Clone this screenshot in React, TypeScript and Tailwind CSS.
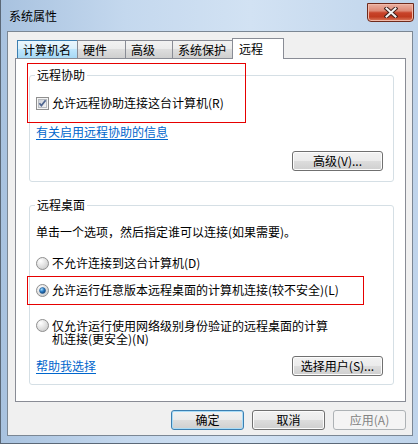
import React from "react";

type Tab = { label: string; w: string; hover?: boolean; active?: boolean };

const tabs: Tab[] = [
  { label: "计算机名", w: "w-[61px]", hover: true },
  { label: "硬件", w: "w-[49px]" },
  { label: "高级", w: "w-[48px]" },
  { label: "系统保护", w: "w-[61px]" },
  { label: "远程", w: "w-[52px]", active: true },
];

function CheckBox() {
  return (
    <svg width="13" height="13" viewBox="0 0 13 13" className="shrink-0">
      <defs>
        <linearGradient id="cbIn" x1="0" y1="0" x2="1" y2="1">
          <stop offset="0" stopColor="#cbcfd5" />
          <stop offset="1" stopColor="#f6f6f6" />
        </linearGradient>
      </defs>
      <rect x="0.5" y="0.5" width="12" height="12" fill="#f4f4f4" stroke="#8f8f8f" />
      <rect x="2.5" y="2.5" width="8" height="8" fill="url(#cbIn)" stroke="#b9bcc1" />
      <path d="M3.4 6.2 L5.4 8.6 L9.6 3.2" fill="none" stroke="#4f6590" strokeWidth="1.7" />
    </svg>
  );
}

function Radio({ checked }: { checked?: boolean }) {
  return (
    <svg width="13" height="13" viewBox="0 0 13 13" className="shrink-0">
      <defs>
        <radialGradient id="rdIn" cx="0.35" cy="0.3" r="0.8">
          <stop offset="0" stopColor="#ffffff" />
          <stop offset="1" stopColor="#c9c9c9" />
        </radialGradient>
        <radialGradient id="rdDot" cx="0.35" cy="0.3" r="0.75">
          <stop offset="0" stopColor="#a8e0ff" />
          <stop offset="0.5" stopColor="#2f7fc8" />
          <stop offset="1" stopColor="#0e3d70" />
        </radialGradient>
      </defs>
      <circle cx="6.5" cy="6.5" r="6" fill="url(#rdIn)" stroke="#8f8f8f" />
      {checked && <circle cx="6.5" cy="6.5" r="3" fill="url(#rdDot)" stroke="#235a92" strokeWidth="0.6" />}
    </svg>
  );
}

function GroupBox({ title, className, children }: { title: string; className: string; children: React.ReactNode }) {
  return (
    <div className={`relative ml-[13px] w-[365px] rounded-[3px] border border-[#d5dfe5] ${className}`}>
      <span className="absolute left-[5px] top-[-8px] bg-white px-[2px] leading-[14px]">{title}</span>
      {children}
    </div>
  );
}

function Btn({ label, kind, className }: { label: string; kind?: "default" | "disabled"; className: string }) {
  const look =
    kind === "default"
      ? "border-[#3c7fb1] bg-[linear-gradient(#f2f2f2_0%,#ebebeb_50%,#dddddd_50%,#cfcfcf_100%)] shadow-[inset_0_0_0_1px_#a9dcf7] text-black"
      : kind === "disabled"
        ? "border-[#adb2b5] bg-[#f4f4f4] text-[#838383]"
        : "border-[#707070] bg-[linear-gradient(#f2f2f2_0%,#ebebeb_50%,#dddddd_50%,#cfcfcf_100%)] shadow-[inset_0_0_0_1px_#fcfcfc] text-black";
  return (
    <div className={`flex h-[20px] items-center justify-center rounded-[3px] border leading-[14px] ${look} ${className}`}>
      {label}
    </div>
  );
}

export default function App() {
  return (
    <div className="relative h-[444px] w-[418px] overflow-hidden bg-[linear-gradient(to_right,#a8c2df_0%,#c4d8ee_30%,#d2e2f3_60%,#bfd4eb_100%)] font-['Noto_Sans_CJK_SC','Noto_Sans',sans-serif] text-[12px] text-black shadow-[inset_1px_-1px_0_#5b6877]">
      {/* title bar */}
      <div className="flex h-[31px] items-start justify-between">
        <span className="pl-[9px] pt-[9px] leading-[14px]">系统属性</span>
        <div className="mr-[4px] mt-[3px] flex h-[19px] w-[47px] items-center justify-center rounded-b-[4px] border border-[#6e2a1c] bg-[linear-gradient(#eab0a2_0%,#de8a76_40%,#c8432a_52%,#c03a1f_75%,#dc7c60_100%)] shadow-[inset_0_0_0_1px_#f1b9a9]">
          <svg width="14" height="11" viewBox="0 0 14 11">
            <path d="M2.5 1.5 L11.5 9.5 M11.5 1.5 L2.5 9.5" stroke="#41201a" strokeWidth="4" strokeLinecap="square" />
            <path d="M2.5 1.5 L11.5 9.5 M11.5 1.5 L2.5 9.5" stroke="#f4f4f4" strokeWidth="2" strokeLinecap="square" />
          </svg>
        </div>
      </div>

      {/* client area */}
      <div className="ml-[7px] h-[405px] w-[406px] border border-[#7b8794] bg-[#f0f0f0]">
        <div className="pl-[7px] pt-[6px]">
          {/* tabs */}
          <div className="relative z-10 flex h-[20px] items-end pl-[2px]">
            {tabs.map((t, i) =>
              t.active ? (
                <div
                  key={t.label}
                  className={`-mb-px h-[21px] ${t.w} ${i ? "-ml-px" : ""} border-x border-t border-[#898c95] bg-white pl-[6px] pt-[3px] leading-[14px]`}
                >
                  {t.label}
                </div>
              ) : (
                <div
                  key={t.label}
                  className={`h-[18px] ${t.w} ${i ? "-ml-px" : ""} border-x border-t ${
                    t.hover
                      ? "border-[#3c7fb1] bg-[linear-gradient(#eaf6fd_0%,#d9f0fc_50%,#bee6fd_50%,#a7d9f5_100%)]"
                      : "border-[#898c95] bg-[linear-gradient(#f2f2f2_0%,#ebebeb_50%,#dddddd_50%,#cfcfcf_100%)]"
                  } pl-[5px] pt-[2px] leading-[14px]`}
                >
                  {t.label}
                </div>
              )
            )}
          </div>

          {/* panel */}
          <div className="relative h-[344px] w-[391px] border border-[#898c95] bg-white">
            <GroupBox title="远程协助" className="mt-[16px] h-[107px]">
              <div className="ml-[6px] mt-[20px] flex h-[14px] items-center gap-[3px] leading-[14px]">
                <CheckBox />
                <span>允许远程协助连接这台计算机(R)</span>
              </div>
              <div className="ml-[6px] mt-[15px] leading-[14px]">
                <span className="text-[#0066cc] underline underline-offset-2">有关启用远程协助的信息</span>
              </div>
              <div className="mr-[10px] mt-[12px] flex justify-end">
                <Btn label="高级(V)..." className="h-[19px] w-[91px]" />
              </div>
            </GroupBox>

            <GroupBox title="远程桌面" className="mt-[23px] h-[180px]">
              <div className="ml-[6px] mt-[19px] leading-[14px]">单击一个选项，然后指定谁可以连接(如果需要)。</div>
              <div className="ml-[6px] mt-[17px] flex h-[14px] items-center gap-[3px] leading-[14px]">
                <Radio />
                <span>不允许连接到这台计算机(D)</span>
              </div>
              <div className="ml-[6px] mt-[13px] flex h-[14px] items-center gap-[3px] leading-[14px]">
                <Radio checked />
                <span>允许运行任意版本远程桌面的计算机连接(较不安全)(L)</span>
              </div>
              <div className="ml-[6px] mt-[22px] flex items-start gap-[3px] leading-[13px]">
                <div className="flex h-[13px] items-center">
                  <Radio />
                </div>
                <div className="flex flex-col">
                  <span>仅允许运行使用网络级别身份验证的远程桌面的计算</span>
                  <span>机连接(更安全)(N)</span>
                </div>
              </div>
              <div className="ml-[6px] mr-[10px] mt-[11px] flex items-center justify-between">
                <span className="leading-[14px] text-[#0066cc] underline underline-offset-2">帮助我选择</span>
                <Btn label="选择用户(S)..." className="h-[19px] w-[91px]" />
              </div>
            </GroupBox>

            {/* red annotation frames */}
            <div className="absolute left-[11px] top-[4px] h-[60px] w-[219px] border border-[#e60000]" />
            <div className="absolute left-[11px] top-[217px] h-[29px] w-[337px] border border-[#e60000]" />
          </div>

          {/* dialog buttons */}
          <div className="mt-[8px] flex justify-end gap-[8px] pr-[6px]">
            <Btn label="确定" kind="default" className="w-[73px]" />
            <Btn label="取消" className="w-[73px]" />
            <Btn label="应用(A)" kind="disabled" className="w-[73px]" />
          </div>
        </div>
      </div>
    </div>
  );
}
